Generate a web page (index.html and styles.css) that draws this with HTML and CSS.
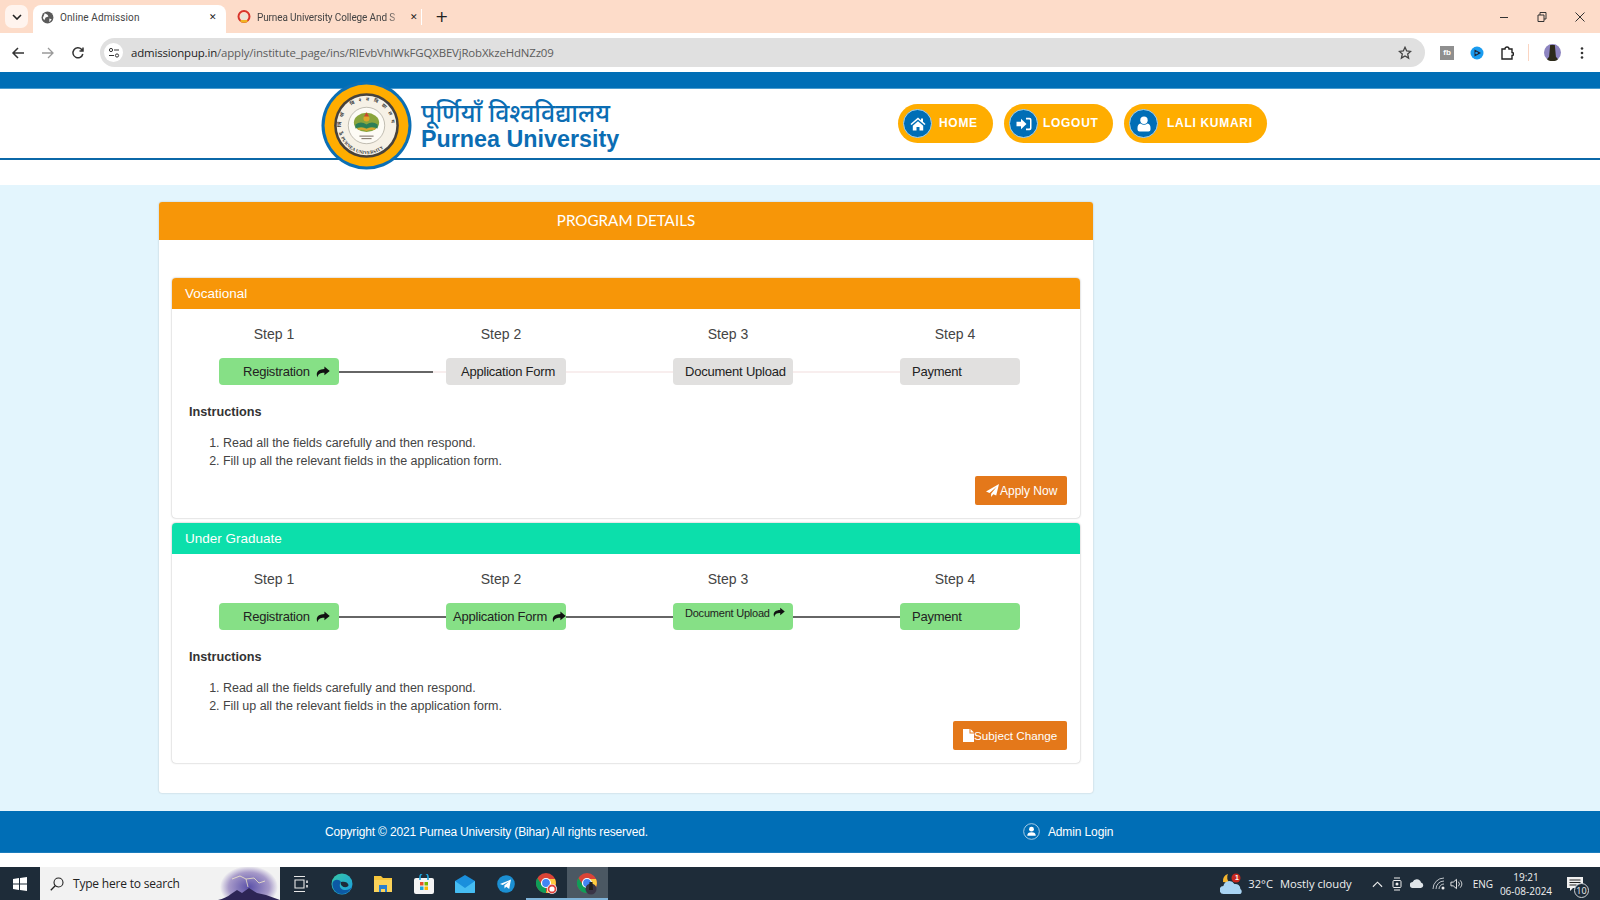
FILE: index.html
```html
<!DOCTYPE html>
<html lang="en">
<head>
<meta charset="utf-8">
<title>Online Admission</title>
<link rel="stylesheet" href="styles.css">
</head>
<body>
<svg class="defs" width="0" height="0" aria-hidden="true">
  <symbol id="share" viewBox="0 0 16 13"><path d="M9.6 0.3 15.7 5.3 9.6 10.3V7.3C5.4 7.2 2.7 8.2 1.6 12.4 -0.6 7.4 2.4 3.4 9.6 3.2Z"/></symbol>
</svg>

<div class="tabstrip">
  <div class="tab-menu"><svg viewBox="0 0 10 6" width="10" height="6"><path d="M1 1l4 4 4-4" fill="none" stroke="#222" stroke-width="1.6"/></svg></div>
  <div class="tab tab-active">
    <svg viewBox="0 0 14 14" width="13" height="13"><circle cx="7" cy="7" r="6.4" fill="#5b5b5b"/><path d="M4 2.5l3 1.500 1 2-3 1-1.500 3L2 7.500zM9 8l2.500 1-2.500 3z" fill="#fff"/></svg>
    <span class="tab-title">Online Admission</span>
    <span class="tab-x">✕</span>
  </div>
  <div class="tab tab-bg">
    <svg viewBox="0 0 14 14" width="14" height="14"><circle cx="7" cy="6.500" r="5.500" fill="none" stroke="#d8342b" stroke-width="2"/><circle cx="7" cy="6.500" r="3" fill="#e8e4d8"/><path d="M3 11.500q4 2.500 8 0l-1-1.500H4z" fill="#f0b323"/></svg>
    <span class="tab-title tab-fade">Purnea University College And S</span>
    <span class="tab-x">✕</span>
  </div>
  <span class="tab-sep"></span>
  <span class="tab-plus">+</span>
  <div class="win-controls">
    <svg viewBox="0 0 10 10" width="10" height="10"><path d="M1 5.500h8" stroke="#333" stroke-width="1"/></svg>
    <svg viewBox="0 0 10 10" width="10" height="10"><path d="M1 3h6v6.500H1zM3 3V.5h6v6.500H7" fill="none" stroke="#333" stroke-width="1"/></svg>
    <svg viewBox="0 0 10 10" width="10" height="10"><path d="M.5.500l9 9M9.500.5l-9 9" stroke="#333" stroke-width="1"/></svg>
  </div>
</div>

<div class="toolbar">
  <svg class="tb-ico" viewBox="0 0 14 14" width="14" height="14"><path d="M13 7H2M7 2 2 7l5 5" fill="none" stroke="#333" stroke-width="1.500"/></svg>
  <svg class="tb-ico" viewBox="0 0 14 14" width="14" height="14"><path d="M1 7h11M7 2l5 5-5 5" fill="none" stroke="#9a9a9a" stroke-width="1.300"/></svg>
  <svg class="tb-ico" viewBox="0 0 14 14" width="14" height="14"><path d="M11.800 8A5 5 0 1 1 10.500 3.300L12 5M12 1.500V5H8.500" fill="none" stroke="#333" stroke-width="1.500"/></svg>
  <div class="omnibox">
    <span class="site-ico"><svg viewBox="0 0 12 12" width="12" height="12"><circle cx="3" cy="3" r="1.600" fill="none" stroke="#333"/><path d="M6 3h5M1 8.500h5" stroke="#333"/><circle cx="9" cy="8.500" r="1.600" fill="none" stroke="#333"/></svg></span>
    <span class="url"><span class="url-host">admissionpup.in</span>/apply/institute_page/ins/RlEvbVhlWkFGQXBEVjRobXkzeHdNZz09</span>
    <svg class="star" viewBox="0 0 14 14" width="14" height="14"><path d="M7 1.300 8.700 5l4 .4-3 2.700.9 4L7 10l-3.600 2.100.9-4-3-2.700 4-.4z" fill="none" stroke="#444" stroke-width="1.300"/></svg>
  </div>
  <div class="ext">
    <span class="ext-box">fb</span>
    <svg viewBox="0 0 14 14" width="14" height="14"><circle cx="7" cy="7" r="6.500" fill="#1a9cf0"/><path d="M4.500 3.500 11 7l-6.500 3.500z" fill="#223"/><circle cx="6.500" cy="7" r="1.300" fill="#1a9cf0"/></svg>
    <svg viewBox="0 0 14 14" width="14" height="14"><path d="M2 3h3a2 2 0 0 1 4 0h3v3.500a1.500 1.500 0 0 1 0 3V13H2z" fill="none" stroke="#222" stroke-width="1.400"/></svg>
    <span class="ext-sep"></span>
    <svg viewBox="0 0 16 16" width="17" height="17"><circle cx="8" cy="8" r="8" fill="#8d84c0"/><path d="M5.800 1h4.400l1 11 2 2.300A8 8 0 0 1 2.800 14.300l2-2.300z" fill="#2d2a1a"/></svg>
    <svg class="ext-menu" viewBox="0 0 4 14" width="4" height="14"><circle cx="2" cy="2.500" r="1.300" fill="#333"/><circle cx="2" cy="7" r="1.300" fill="#333"/><circle cx="2" cy="11.500" r="1.300" fill="#333"/></svg>
  </div>
</div>

<div class="topbar"></div>

<header class="site-header">
  <div class="header-inner">
    <svg class="logo" viewBox="0 0 90 88" width="91" height="89">
      <defs>
        <path id="arcTop" d="M21.500 53a25 25 0 1 1 47 0"/>
        <path id="arcBot" d="M18 50a27.500 27.500 0 0 0 54 0"/>
      </defs>
      <ellipse cx="45" cy="44" rx="44.500" ry="43.500" fill="#0b6fb5"/>
      <ellipse cx="45" cy="44" rx="41.500" ry="40.500" fill="#ffad00"/>
      <circle cx="45" cy="44" r="32" fill="#47423c"/>
      <circle cx="45" cy="44" r="29.500" fill="#f6f1e6"/>
      <circle cx="45" cy="44" r="18" fill="#fdfbf5"/>
      <circle cx="45" cy="44" r="18" fill="none" stroke="#8a8578" stroke-width=".5"/>
      <text class="seal-text"><textPath href="#arcTop" textLength="84" lengthAdjust="spacing">पूर्णियाँ विश्वविद्यालय</textPath></text>
      <text class="seal-text seal-en"><textPath href="#arcBot" startOffset="8%" textLength="50">PURNEA UNIVERSITY</textPath></text>
      <ellipse cx="45" cy="41" rx="12.500" ry="9.500" fill="#8aa53c"/>
      <path d="M34 43q5.500-4 11 0 5.500-4 11 0v4q-5.500-3-11 0-5.500-3-11 0z" fill="#2c7f57"/>
      <path d="M36 47q4.500-2 9 .5 4.500-2.500 9-.5l-1 1.500q-4-1-8 1-4-2-8-1z" fill="#d9a52f"/>
      <circle cx="45" cy="37" r="3" fill="#e0a52a"/>
      <path d="M45 31l-2.500 4h5z" fill="#c9472a"/>
      <path d="M38 54.500h14M40 57h10" stroke="#6a5d50" stroke-width=".9"/>
    </svg>
    <div class="brand">
      <div class="brand-hi">पूर्णियाँ विश्वविद्यालय</div>
      <div class="brand-en">Purnea University</div>
    </div>
    <nav class="nav">
      <a class="pill pill-home"><span class="pill-ico"><svg viewBox="0 0 16 14" width="16" height="14"><path d="M8 .5 0.500 7l1 1.100L8 2.500l6.500 5.600 1-1.100-2.500-2.200V1.500h-2v1.700zM2.800 8.700V13.500h3.700V10h3v3.500h3.700V8.700L8 4.200z" fill="#fff"/></svg></span>HOME</a>
      <a class="pill pill-logout"><span class="pill-ico"><svg viewBox="0 0 16 14" width="16" height="14"><path d="M0.500 4.800H5V1.800L10.500 7 5 12.200V9.200H.5zM10 .8h3.500a2 2 0 0 1 2 2v8.400a2 2 0 0 1-2 2H10v-1.600h3.200a.8.8 0 0 0 .8-.8V3.200a.8.8 0 0 0-.8-.8H10z" fill="#fff"/></svg></span>LOGOUT</a>
      <a class="pill pill-user"><span class="pill-ico"><svg viewBox="0 0 14 16" width="14" height="16"><circle cx="7" cy="4.200" r="3.700" fill="#fff"/><path d="M3.500 7.500q3.500 2.500 7 0 3 .8 3 4.500v1.500q0 2-2 2h-9q-2 0-2-2V12q0-3.700 3-4.500z" fill="#fff"/></svg></span>LALI KUMARI</a>
    </nav>
  </div>
</header>

<main class="main">
  <section class="card">
    <h1 class="card-head">PROGRAM DETAILS</h1>
    <div class="card-body">

      <article class="panel">
        <h2 class="panel-head head-orange">Vocational</h2>
        <div class="steps">
          <div class="step">
            <div class="step-label">Step 1</div>
            <div class="step-row">
              <div class="box done pad-reg">Registration<svg class="arrow arrow-reg"><use href="#share"/></svg></div>
              <span class="line line-partial"></span>
            </div>
          </div>
          <div class="step">
            <div class="step-label">Step 2</div>
            <div class="step-row">
              <div class="box pad-15">Application Form</div>
              <span class="line"></span>
            </div>
          </div>
          <div class="step">
            <div class="step-label">Step 3</div>
            <div class="step-row">
              <div class="box pad-12">Document Upload</div>
              <span class="line"></span>
            </div>
          </div>
          <div class="step step-last">
            <div class="step-label">Step 4</div>
            <div class="step-row">
              <div class="box pad-12">Payment</div>
            </div>
          </div>
        </div>
        <div class="instr-title">Instructions</div>
        <ol class="instr">
          <li>Read all the fields carefully and then respond.</li>
          <li>Fill up all the relevant fields in the application form.</li>
        </ol>
        <div class="actions">
          <a class="btn btn-apply"><svg viewBox="0 0 14 14" width="13" height="13"><path d="M14 0 0 8l3.800 1.600L11.500 3 5.500 10.500V14l2.400-2.900 3.100 1.300z" fill="#fff"/></svg>Apply Now</a>
        </div>
      </article>

      <article class="panel">
        <h2 class="panel-head head-teal">Under Graduate</h2>
        <div class="steps">
          <div class="step">
            <div class="step-label">Step 1</div>
            <div class="step-row">
              <div class="box done pad-reg">Registration<svg class="arrow arrow-reg"><use href="#share"/></svg></div>
              <span class="line line-done"></span>
            </div>
          </div>
          <div class="step">
            <div class="step-label">Step 2</div>
            <div class="step-row">
              <div class="box done pad-7">Application Form<svg class="arrow arrow-app"><use href="#share"/></svg></div>
              <span class="line line-done"></span>
            </div>
          </div>
          <div class="step">
            <div class="step-label">Step 3</div>
            <div class="step-row">
              <div class="box done pad-12 box-small">Document Upload<svg class="arrow arrow-doc"><use href="#share"/></svg></div>
              <span class="line line-done"></span>
            </div>
          </div>
          <div class="step step-last">
            <div class="step-label">Step 4</div>
            <div class="step-row">
              <div class="box done pad-12">Payment</div>
            </div>
          </div>
        </div>
        <div class="instr-title">Instructions</div>
        <ol class="instr">
          <li>Read all the fields carefully and then respond.</li>
          <li>Fill up all the relevant fields in the application form.</li>
        </ol>
        <div class="actions">
          <a class="btn btn-subject"><svg viewBox="0 0 11 13" width="11" height="13"><path d="M0 0h6.500v4.500H11V13H0zM7.500 0 11 3.500H7.500z" fill="#fff"/></svg>Subject Change</a>
        </div>
      </article>

    </div>
  </section>
</main>

<footer class="footer">
  <span class="copy">Copyright © 2021 Purnea University (Bihar) All rights reserved.</span>
  <a class="admin"><svg viewBox="0 0 18 18" width="17" height="17"><circle cx="9" cy="9" r="8.300" fill="none" stroke="#d8e8f4" stroke-width=".8"/><circle cx="9" cy="6.500" r="2.600" fill="#fff"/><path d="M4.500 13.500q0-3.700 4.500-3.700t4.500 3.700z" fill="#fff"/></svg>Admin Login</a>
</footer>
<div class="strip"></div>

<div class="taskbar">
  <svg class="start" viewBox="0 0 14 14" width="14" height="14"><path d="M0 2l6-.9V6.500H0zM7 1l7-1v6.500H7zM0 7.500h6v5.400l-6-.9zM7 7.500h7V14l-7-1z" fill="#fff"/></svg>
  <div class="search">
    <svg viewBox="0 0 14 14" width="14" height="14"><circle cx="8.500" cy="5.500" r="4.500" fill="none" stroke="#222" stroke-width="1.100"/><path d="M5.200 8.800.8 13.200" stroke="#222" stroke-width="1.300"/></svg>
    <span class="search-text">Type here to search</span>
    <svg class="search-art" viewBox="0 0 62 33" width="62" height="33"><defs><radialGradient id="glow"><stop offset="0" stop-color="#5a50a8"/><stop offset=".7" stop-color="#a79ac9"/><stop offset="1" stop-color="#f2f2f2"/></radialGradient></defs><ellipse cx="31" cy="20" rx="29" ry="21" fill="url(#glow)"/><path d="M0 33q8-2 13-6l6-4 5 3 7-5 8 5 9 2 14 5z" fill="#2d2555"/><path d="M14 12l8-3 6 3 8-1 5 5 6-2M28 12l2 8" stroke="#fff6c8" stroke-width=".7" fill="none"/></svg>
  </div>
  <div class="task-apps">
    <span class="task-app"><svg viewBox="0 0 14 16" width="14" height="16"><path d="M0 .5h11M0 15.500h11M1 4h9v8H1z" fill="none" stroke="#e8e8e8" stroke-width="1.100"/><path d="M13 4.500V7M13 9v2.500" stroke="#e8e8e8" stroke-width="1.600"/></svg></span>
    <span class="task-app"><svg viewBox="0 0 22 22" width="22" height="22"><defs><linearGradient id="edgeA" x1="0" y1="0" x2="1" y2="1"><stop offset="0" stop-color="#36c7a4"/><stop offset="1" stop-color="#1b9de2"/></linearGradient></defs><circle cx="11" cy="11" r="10.500" fill="url(#edgeA)"/><path d="M21 13c-1 5-6 8-10 8C5 21 1 16 1.500 10 3 6 8 6 10 9c-2 2-2 7 3 8 4 .5 7-1 8-4z" fill="#0c59a4"/><path d="M10 9c3-1 7 0 7.500 3 .2 1.500-2 2.500-5 2 -2-1-3.500-3-2.500-5z" fill="#1d2b38"/></svg></span>
    <span class="task-app"><svg viewBox="0 0 20 18" width="20" height="18"><path d="M1 1h7l2 2h9v14H1z" fill="#f7c63c"/><path d="M1 5h18v12H1z" fill="#fbd35a"/><path d="M6 10h8v7h-2v-3H8v3H6z" fill="#2a7fd0"/></svg></span>
    <span class="task-app"><svg viewBox="0 0 20 20" width="20" height="20"><rect y="4" width="20" height="16" rx="2" fill="#f4f4f4"/><path d="M6 6V3a4 4 0 0 1 8 0v3" fill="none" stroke="#1ca5dc" stroke-width="1.600"/><rect x="6" y="8" width="3.500" height="3.500" fill="#e8502e"/><rect x="10.500" y="8" width="3.500" height="3.500" fill="#79b900"/><rect x="6" y="12.500" width="3.500" height="3.500" fill="#1ca5dc"/><rect x="10.500" y="12.500" width="3.500" height="3.500" fill="#fcb900"/></svg></span>
    <span class="task-app"><svg viewBox="0 0 20 18" width="20" height="18"><path d="M0 6 10 0l10 6v11a1 1 0 0 1-1 1H1a1 1 0 0 1-1-1z" fill="#1a8fdc"/><path d="M0 6 10 13 20 6v11a1 1 0 0 1-1 1H1a1 1 0 0 1-1-1z" fill="#46bdf2"/></svg></span>
    <span class="task-app"><svg viewBox="0 0 18 18" width="18" height="18"><circle cx="9" cy="9" r="8.800" fill="#1b8fd2"/><path d="M3 9l11-4.500-1.800 9.500-3-2.200-1.600 1.600-.3-3L12 6.500 5.700 10z" fill="#fff"/></svg></span>
    <span class="task-app task-open"><svg viewBox="0 0 22 22" width="22" height="22"><circle cx="10" cy="10" r="10" fill="#db4437"/><path d="M10 20A10 10 0 0 1 1.300 5L6 12l4 3z" fill="#0f9d58"/><path d="M10 20a10 10 0 0 0 9-14h-9l4 5z" fill="#ffcd40"/><circle cx="10" cy="10" r="4.500" fill="#4285f4" stroke="#fff" stroke-width="1.200"/><circle cx="16" cy="16" r="5" fill="#fff"/><circle cx="16" cy="16" r="3.500" fill="none" stroke="#e0413a" stroke-width="1.800"/></svg></span>
    <span class="task-app task-active"><svg viewBox="0 0 22 22" width="22" height="22"><circle cx="10" cy="10" r="10" fill="#db4437"/><path d="M10 20A10 10 0 0 1 1.300 5L6 12l4 3z" fill="#0f9d58"/><path d="M10 20a10 10 0 0 0 9-14h-9l4 5z" fill="#ffcd40"/><circle cx="10" cy="10" r="4.500" fill="#4285f4" stroke="#fff" stroke-width="1.200"/><circle cx="14" cy="16" r="5.500" fill="#3a3546"/><path d="M12.500 9h3l.5 8h-4z" fill="#22201c"/></svg></span>
  </div>
  <div class="tray">
    <span class="weather-ico"><svg viewBox="0 0 24 22" width="24" height="22"><path d="M8 1a7 7 0 0 0 2 9L3 9A7 7 0 0 1 8 1z" fill="#f5b52e"/><path d="M4 21a4 4 0 0 1-.6-8 6 6 0 0 1 11-2 5 5 0 0 1 6 5 3 3 0 0 1 0 5z" fill="#a9d4f3"/><circle cx="16" cy="5" r="4.500" fill="#c9281f"/></svg><span class="weather-badge">1</span></span>
    <span class="weather">32°C</span>
    <span class="weather weather-text">Mostly cloudy</span>
    <svg class="tray-ico tray-caret" viewBox="0 0 12 8" width="11" height="8"><path d="M1 7l5-5 5 5" fill="none" stroke="#eee" stroke-width="1.200"/></svg>
    <svg class="tray-ico tray-meet" viewBox="0 0 10 14" width="10" height="14"><path d="M2 1h6M2 13h6" stroke="#eee"/><rect x="1" y="3.500" width="8" height="7" rx="1" fill="none" stroke="#eee"/><circle cx="5" cy="7" r="1.500" fill="#eee"/></svg>
    <svg class="tray-ico" viewBox="0 0 14 9" width="14" height="9"><path d="M3 9a3 3 0 0 1-.4-6A4.500 4.500 0 0 1 11 3.500 2.800 2.800 0 0 1 11 9z" fill="#dfe4e8"/></svg>
    <svg class="tray-ico" viewBox="0 0 13 13" width="13" height="13"><path d="M1 12a11 11 0 0 1 11-11M4 12a8 8 0 0 1 8-8M7 12a5 5 0 0 1 5-5" fill="none" stroke="#cfd4d8" stroke-width=".9"/><circle cx="11" cy="11" r="1.500" fill="#eee"/></svg>
    <svg class="tray-ico tray-sound" viewBox="0 0 14 12" width="13" height="12"><path d="M1 4h2.500L7 1v10L3.500 8H1z" fill="none" stroke="#eee"/><path d="M9 3.500a3.500 3.500 0 0 1 0 5M11 2a6 6 0 0 1 0 8" fill="none" stroke="#eee" stroke-width=".9"/></svg>
    <span class="tray-lang">ENG</span>
    <span class="clock"><span>19:21</span><span>06-08-2024</span></span>
    <span class="notif"><svg viewBox="0 0 16 14" width="16" height="14"><path d="M0 0h16v11H6L3 14v-3H0z" fill="#f0f0f0"/><path d="M2.500 3h11M2.500 5.500h11M2.500 8h7" stroke="#222" stroke-width="1"/></svg><span class="notif-count">10</span></span>
  </div>
</div>
</body>
</html>
```
FILE: styles.css
```css
* { box-sizing: border-box; }
html, body { margin: 0; padding: 0; }
body {
  width: 1600px;
  height: 900px;
  overflow: hidden;
  display: flex;
  flex-direction: column;
  background: #fff;
  font-family: "Liberation Sans", Arial, sans-serif;
  color: #333;
}
.defs { position: absolute; }
svg { display: block; flex: none; }

/* browser chrome */
.tabstrip {
  height: 33px;
  flex: none;
  background: #fddcc9;
  display: flex;
  align-items: flex-end;
  padding-left: 5px;
  font-family: Roboto, "Open Sans", sans-serif;
  font-size: 10px;
  color: #444;
}
.tab-menu {
  width: 23px;
  height: 23px;
  margin-bottom: 5px;
  background: #fff4ee;
  border-radius: 7px;
  display: flex;
  align-items: center;
  justify-content: center;
}
.tab {
  height: 28px;
  display: flex;
  align-items: center;
  border-radius: 8px 8px 0 0;
  padding-bottom: 4px;
}
.tab-active {
  width: 193px;
  margin-left: 5px;
  background: #fff;
  padding-left: 8px;
}
.tab-active .tab-title { margin-left: 6px; width: 149px; }
.tab-bg { width: 195px; padding-left: 11px; }
.tab-bg .tab-title { margin-left: 6px; width: 144px; }
.tab-title { white-space: nowrap; overflow: hidden; flex: none; letter-spacing: .1px; }
.tab-bg .tab-title { letter-spacing: -.12px; }
.tab-x { font-size: 9px; color: #222; font-family: "DejaVu Sans", sans-serif; }
.tab-fade {
  -webkit-mask-image: linear-gradient(90deg, #000 90%, rgba(0, 0, 0, .25));
  mask-image: linear-gradient(90deg, #000 90%, rgba(0, 0, 0, .25));
}
.tab-bg .tab-x { margin-left: 9px; }
.tab-sep { width: 1px; height: 16px; background: #fff; margin: 0 0 8px 0; }
.tab-plus {
  margin: 0 0 5px 13px;
  font: 400 16px/22px "DejaVu Sans", sans-serif;
  color: #222;
}
.win-controls {
  margin-left: auto;
  height: 33px;
  display: flex;
  align-items: center;
  gap: 28px;
  padding-right: 15px;
}
.toolbar {
  height: 39px;
  flex: none;
  background: #fff;
  border-radius: 10px 10px 0 0;
  display: flex;
  align-items: center;
  padding-left: 11px;
}
.tb-ico { margin-right: 16px; }
.omnibox {
  width: 1325px;
  height: 29px;
  margin-left: -1px;
  background: #e0e0e0;
  border-radius: 15px;
  display: flex;
  align-items: center;
  padding: 0 13px 0 4px;
}
.site-ico {
  width: 19px;
  height: 19px;
  background: #fff;
  border-radius: 50%;
  display: flex;
  align-items: center;
  justify-content: center;
}
.url {
  margin-left: 8px;
  font-family: "Open Sans", "Noto Sans", sans-serif;
  font-size: 11.450px;
  color: #5c5c5c;
  white-space: nowrap;
  letter-spacing: -.16px;
}
.url-host { color: #222; }
.star { margin-left: auto; }
.ext {
  margin-left: 15px;
  display: flex;
  align-items: center;
  gap: 16px;
}
.ext-box {
  width: 14px;
  height: 14px;
  background: #8f8f8f;
  color: #fff;
  font: 700 8px/14px "Liberation Sans", sans-serif;
  text-align: center;
}
.ext-sep { width: 1px; height: 17px; background: #fbd5c2; margin: 0 -1px 0 -2px; }
.ext-menu { margin-left: 3px; }

/* site */
.topbar {
  height: 17px;
  flex: none;
  background: #006eb6;
  border-bottom: 1px solid #4b9ccf;
}
.site-header {
  height: 96px;
  flex: none;
  background: #fff;
}
.header-inner {
  height: 71px;
  display: flex;
  align-items: flex-start;
  padding-left: 321px;
  border-bottom: 2px solid #0b68a8;
}
.logo { margin-top: -8px; position: relative; z-index: 2; }
.brand { width: 486px; padding-left: 9px; color: #0b6db3; }
.brand-hi {
  height: 36px;
  margin-top: 5px;
  font: 500 24.800px/36px "Noto Sans", "DejaVu Sans", "Liberation Sans", sans-serif;
  white-space: nowrap;
}
.brand-en {
  font: 700 23.300px/26px "Liberation Sans", Arial, sans-serif;
  white-space: nowrap;
  margin-top: -4px;
}
.seal-text { font: 700 4.800px "Noto Sans", "Liberation Serif", serif; fill: #3a3a3a; }
.seal-en { font: 700 4.600px "Liberation Serif", serif; }
.nav {
  display: flex;
  gap: 11px;
  margin-top: 15px;
}
.pill {
  height: 39px;
  display: flex;
  align-items: center;
  background: #ffad00;
  border-radius: 20px;
  padding-left: 5px;
  color: #fff;
  font: 700 12px/39px "Liberation Sans", Arial, sans-serif;
  letter-spacing: .7px;
}
.pill-home { width: 95px; }
.pill-logout { width: 109px; }
.pill-user { width: 143px; }
.pill-ico {
  width: 29px;
  height: 29px;
  background: #006eb6;
  border: 1px solid #a9d2ec;
  border-radius: 50%;
  display: flex;
  align-items: center;
  justify-content: center;
  flex: none;
}
.pill-home .pill-ico { margin-right: 7px; }
.pill-logout .pill-ico { margin-right: 5px; }
.pill-user .pill-ico { margin-right: 9px; }
.main {
  flex: 1;
  background: #e3f5fd;
  padding: 17px 0 0 159px;
}
.card {
  width: 934px;
  height: 591px;
  background: #fff;
  border-radius: 3px;
  box-shadow: 0 0 2px rgba(0, 0, 0, .22);
}
.card-head {
  margin: 0;
  height: 38px;
  background: #f79608;
  border-radius: 3px 3px 0 0;
  color: #fff;
  font: 400 15.200px/36px Lato, "Open Sans", sans-serif;
  text-align: center;
}
.card-body {
  padding: 38px 13px 0;
  display: flex;
  flex-direction: column;
  gap: 5px;
}
.panel {
  height: 240px;
  background: #fff;
  border-radius: 4px;
  box-shadow: 0 0 2px rgba(0, 0, 0, .35);
}
.panel-head {
  margin: 0;
  height: 31px;
  padding-left: 13px;
  border-radius: 4px 4px 0 0;
  color: #fff;
  font: 400 13.500px/31px "Liberation Sans", Arial, sans-serif;
}
.head-orange { background: #f79608; }
.head-teal { background: #0cdfab; }
.steps {
  display: flex;
  padding: 15px 0 0 47px;
}
.step { width: 227px; flex: none; }
.step-last { width: 120px; }
.step-label {
  width: 110px;
  text-align: center;
  font-size: 14px;
  line-height: 20px;
  color: #444;
}
.step-row {
  margin-top: 14px;
  display: flex;
  align-items: center;
}
.box {
  width: 120px;
  height: 27px;
  flex: none;
  display: flex;
  align-items: center;
  background: #e1e0df;
  border-radius: 4px;
  font-size: 13px;
  color: #222;
  white-space: nowrap;
  letter-spacing: -.22px;
}
.box.done { background: #86e086; }
.box-small { font-size: 11px; align-items: flex-start; padding-top: 4px; }
.pad-reg { padding-left: 24px; }
.pad-15 { padding-left: 15px; }
.pad-12 { padding-left: 12px; }
.pad-7 { padding-left: 7px; }
.arrow { fill: #111; width: 14px; height: 12px; }
.arrow-reg { margin-left: 6px; }
.arrow-app { margin-left: 5px; }
.arrow-doc { margin-left: 3px; width: 12px; height: 11px; }
.line { flex: 1; height: 2px; background: #f8eeee; }
.line-done { background: #666; }
.line-partial { background: linear-gradient(90deg, #666 88%, #f8eeee 88%); }
.instr-title {
  margin: 18px 0 0 17px;
  font-size: 12.700px;
  line-height: 18px;
  font-weight: 700;
  color: #333;
}
.instr {
  margin: 14px 0 0;
  padding-left: 51px;
  font-size: 12.500px;
  line-height: 17.500px;
  color: #444;
  letter-spacing: -.02px;
}
.actions {
  display: flex;
  justify-content: flex-end;
  padding-right: 13px;
  margin-top: 6px;
}
.btn {
  height: 29px;
  display: flex;
  align-items: center;
  background: #e4781a;
  border-radius: 2px;
  color: #fff;
  font-size: 12px;
}
.btn-apply { width: 92px; padding-left: 11px; gap: 1px; }
.btn-subject { width: 114px; padding-left: 10px; font-size: 11.700px; }

.footer {
  height: 42px;
  flex: none;
  background: #006eb6;
  border-bottom: 1px solid #1a7cbd;
  color: #fff;
  font-size: 12px;
  display: flex;
  align-items: center;
  padding-left: 325px;
}
.copy { letter-spacing: -.16px; }
.admin {
  margin-left: 375px;
  display: flex;
  align-items: center;
  gap: 8px;
  letter-spacing: -.12px;
}
.strip { height: 14px; flex: none; background: #fff; }

/* taskbar */
.taskbar {
  height: 33px;
  flex: none;
  background: #1e2c39;
  display: flex;
  align-items: center;
  color: #f0f0f0;
  font-family: "Open Sans", "Noto Sans", sans-serif;
}
.start { margin: 0 13px 0 13px; }
.search {
  width: 240px;
  height: 33px;
  background: #f2f2f2;
  display: flex;
  align-items: center;
  padding-left: 10px;
  color: #222;
  font-size: 12px;
  overflow: hidden;
}
.search-text { margin-left: 9px; white-space: nowrap; letter-spacing: -.2px; }
.search-art { margin-left: auto; margin-right: 0; }
.task-apps { display: flex; margin-left: 0; }
.task-app {
  width: 41px;
  height: 33px;
  display: flex;
  align-items: center;
  justify-content: center;
}
.task-open { box-shadow: inset 0 -2px 0 #7fb3d8; }
.task-active { background: #4b5863; box-shadow: inset 0 -2px 0 #7fb3d8; }
.tray {
  margin-left: auto;
  height: 33px;
  display: flex;
  align-items: center;
  font-size: 11.200px;
  padding-right: 17px;
}
.weather-ico { position: relative; margin-right: 4px; }
.weather-badge {
  position: absolute;
  top: 0;
  left: 13px;
  width: 7px;
  text-align: center;
  font: 700 7px/9px "Liberation Sans", sans-serif;
  color: #fff;
}
.weather-text { margin-left: 7px; }
.tray-ico { margin-left: 8px; }
.tray-caret { margin-left: 20px; }
.tray-meet { margin-left: 9px; }
.tray-sound { margin-left: 5px; }
.tray-lang { font-size: 10px; margin-left: 10px; }
.clock {
  width: 60px;
  margin-left: 3px;
  display: flex;
  flex-direction: column;
  align-items: center;
  font-size: 10px;
  line-height: 14px;
  white-space: nowrap;
}
.notif { position: relative; margin-left: 11px; }
.notif-count {
  position: absolute;
  left: 7px;
  top: 6px;
  width: 15px;
  height: 15px;
  background: #1e2c39;
  border: 1px solid #cfd4d8;
  border-radius: 50%;
  font-size: 9px;
  line-height: 13px;
  text-align: center;
}
```
